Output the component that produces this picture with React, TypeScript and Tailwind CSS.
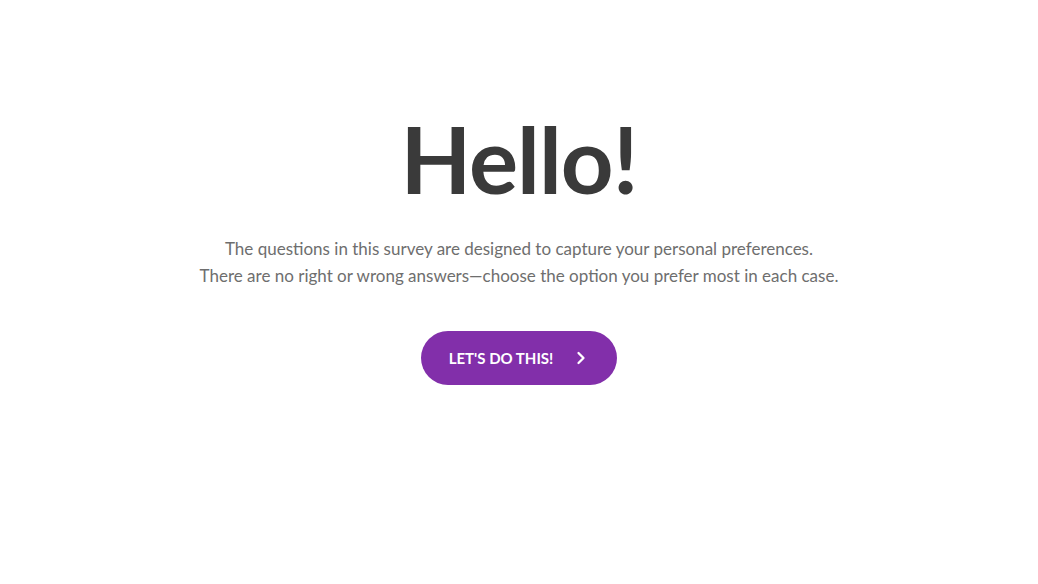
import { ChevronRight } from "lucide-react";

const App = () => {
  return (
    <div className="min-h-screen bg-white flex flex-col items-center pt-[104px] font-['Lato','Noto_Sans',sans-serif]">
      <h1 className="text-[92px] leading-[110px] font-bold text-[#3a3a3a] tracking-[-1px]">Hello!</h1>
      <div className="mt-[21px] text-center text-[17px] leading-[27px] text-[#6e6e6e]">
        <p>The questions in this survey are designed to capture your personal preferences.</p>
        <p>There are no right or wrong answers—choose the option you prefer most in each case.</p>
      </div>
      <button className="mt-[42px] h-[54px] w-[196px] rounded-full bg-[#822faa] text-white flex items-center justify-center gap-[18px] pl-[2px]">
        <span className="text-[15px] font-bold uppercase tracking-[0px]">Let's do this!</span>
        <ChevronRight className="w-[20px] h-[20px]" strokeWidth={2.75} />
      </button>
    </div>
  );
};

export default App;
